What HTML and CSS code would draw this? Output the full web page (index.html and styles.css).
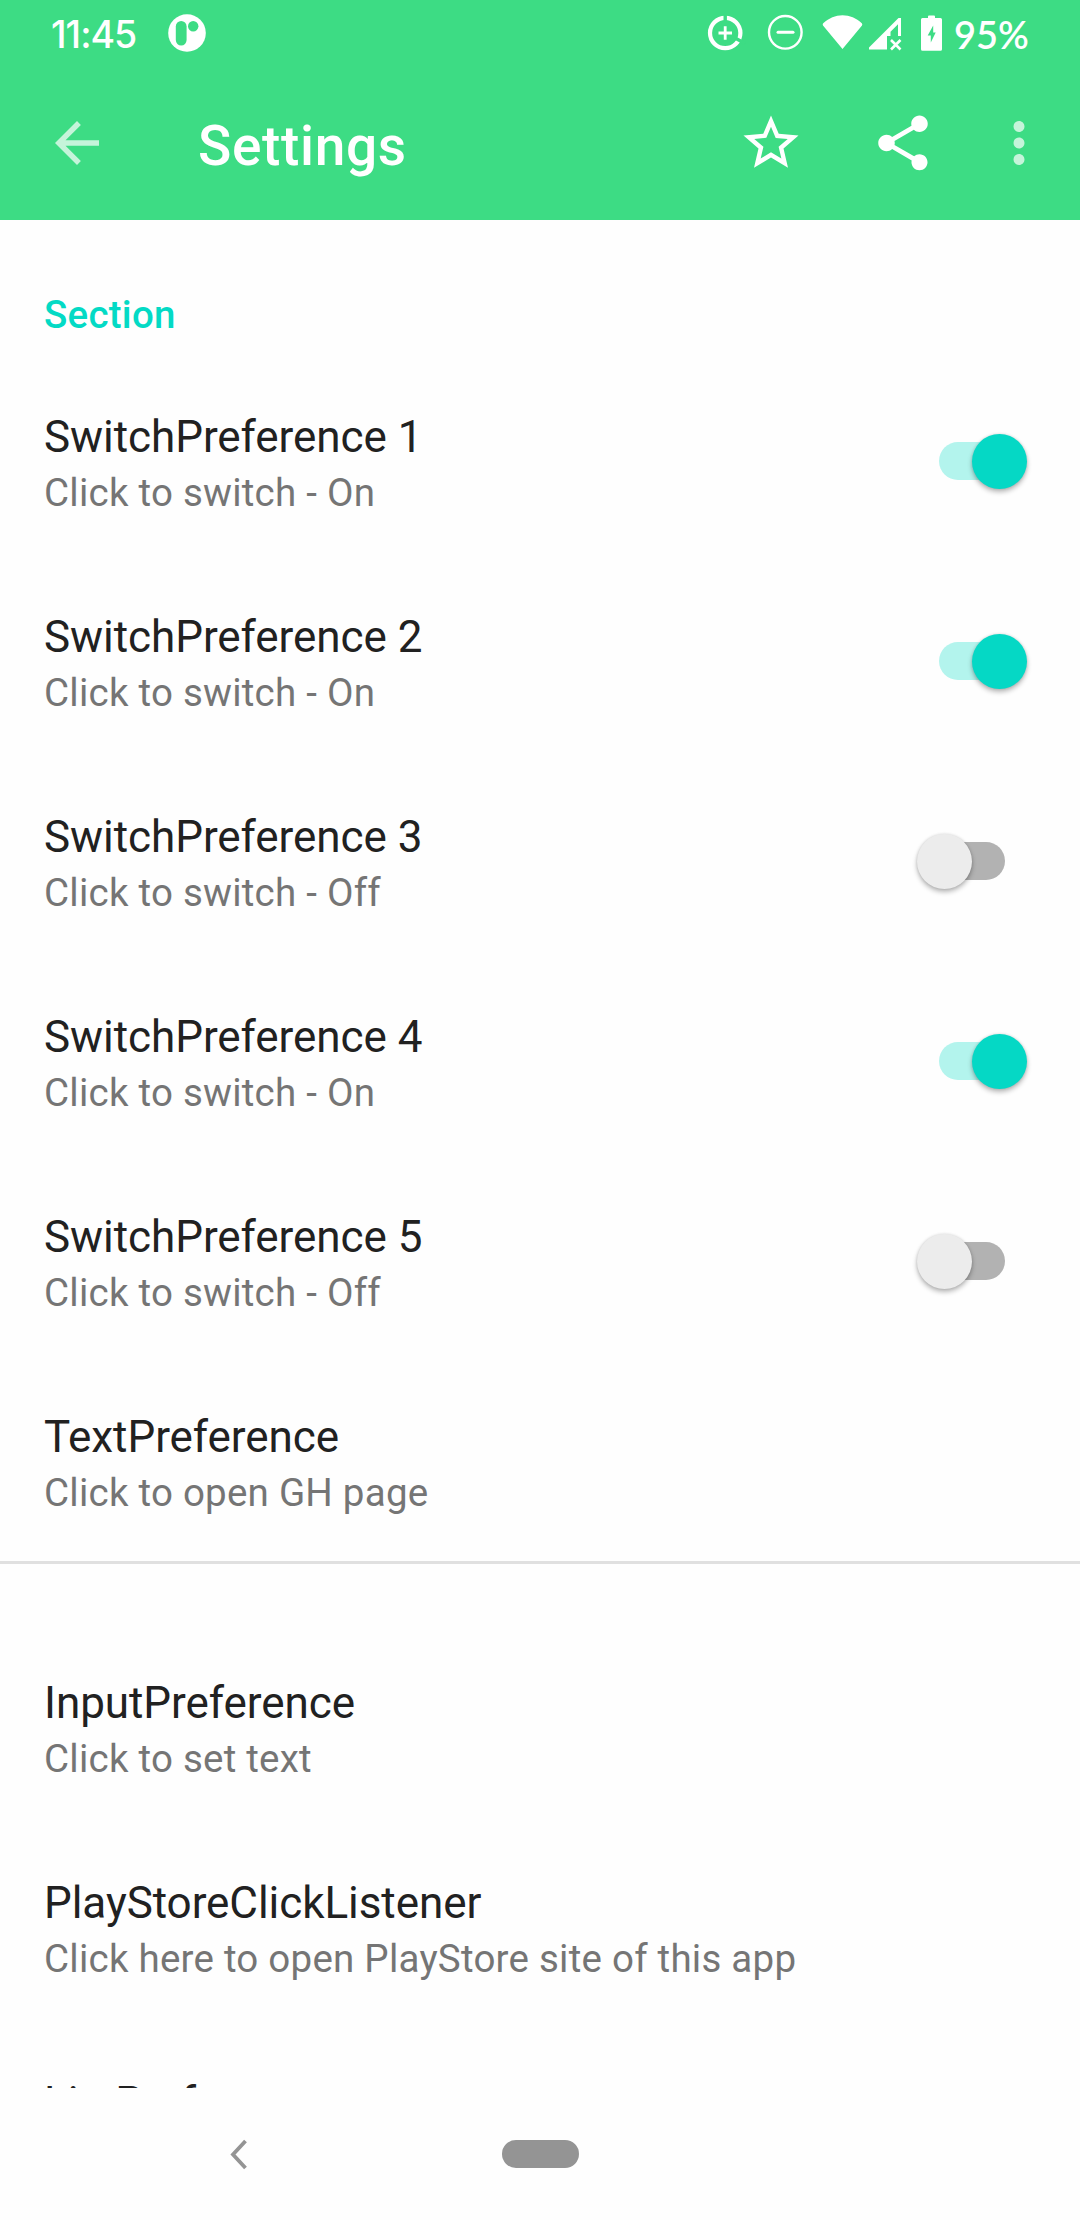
FILE: index.html
```html
<!DOCTYPE html>
<html lang="en">
<head>
<meta charset="utf-8">
<title>Settings</title>
<link rel="stylesheet" href="styles.css">
</head>
<body>
<div class="screen">
  <header class="header">
    <div class="status-bar">
      <span class="clock">11:45</span>
      <svg class="app-icon" width="38" height="38" viewBox="0 0 38 38"><circle cx="19" cy="19" r="18.8" fill="#fff"/><rect x="7.8" y="7" width="10.8" height="24.5" rx="5.4" fill="#3ddc84"/><circle cx="25.2" cy="12.2" r="5.2" fill="#3ddc84"/></svg>
      <svg class="status-icons" width="260" height="50" viewBox="700 8 260 50" fill="none" stroke="#fff">
        <circle cx="725.200" cy="33" r="15.200" stroke-width="4.200"/>
        <path class="ring-gap" d="M725.200 13V22M736 38.500L745 43.500"/>
        <path stroke-width="2.800" d="M718.500 33H732M725.200 26.300V39.700"/>
        <circle cx="785.300" cy="32.300" r="16.300" stroke-width="2.400"/>
        <path stroke-width="3" stroke-linecap="round" d="M778 32.300H793"/>
        <path fill="#fff" stroke="none" d="M842.500 49L823 25.500C822.500 24.500 822.800 23.500 823.500 23C829 18 835.500 15.200 842.500 15.200S856.500 18 861.500 23C862.300 23.700 862.500 24.700 862 25.500Z"/>
        <path fill="#fff" stroke="none" fill-rule="evenodd" d="M869 49.500V47.500L898.500 18H901V36H898V24.200L890.500 31.800V36H887V49.500Z"/>
        <path stroke-width="2.600" d="M891 40L900.500 49.500M900.500 40L891 49.500"/>
        <path fill="#fff" stroke="none" d="M928 18V16.500Q928 15.500 929 15.500H934Q935 15.500 935 16.500V18H940.500Q942 18 942 19.500V49.300Q942 50.800 940.500 50.800H922.500Q921 50.800 921 49.300V19.500Q921 18 922.500 18Z"/>
        <path fill="#3ddc84" stroke="none" d="M933.200 25.500L927.700 35.500H930.800V42.500L935.700 32.500H933.200Z"/>
      </svg>
      <span class="battery">95%</span>
    </div>
    <div class="toolbar">
      <svg class="back" width="66" height="66" viewBox="0 0 24 24"><path fill="#fff" d="M20 11H7.830l5.590-5.590L12 4l-8 8 8 8 1.410-1.410L7.830 13H20v-2z"/></svg>
      <h1 class="title">Settings</h1>
      <svg class="star" width="66" height="66" viewBox="0 0 24 24"><path fill="#fff" d="M22 9.240l-7.190-.62L12 2 9.190 8.630 2 9.240l5.460 4.730L5.820 21 12 17.270 18.180 21l-1.630-7.030L22 9.240zM12 15.400l-3.760 2.270 1-4.280-3.320-2.880 4.380-.38L12 6.100l1.710 4.040 4.380.38-3.320 2.880 1 4.280L12 15.400z"/></svg>
      <svg class="share" width="66" height="66" viewBox="0 0 24 24"><path fill="#fff" d="M18 16.080c-.76 0-1.440.3-1.960.77L8.910 12.700c.05-.23.09-.46.09-.7s-.04-.47-.09-.7l7.050-4.110c.54.5 1.250.81 2.040.81 1.660 0 3-1.340 3-3s-1.340-3-3-3-3 1.340-3 3c0 .24.04.47.09.7L8.040 9.810C7.500 9.310 6.790 9 6 9c-1.660 0-3 1.340-3 3s1.340 3 3 3c.79 0 1.500-.31 2.040-.81l7.120 4.160c-.05.21-.08.43-.08.65 0 1.610 1.310 2.920 2.920 2.920s2.920-1.310 2.920-2.920-1.310-2.920-2.920-2.920z"/></svg>
      <svg class="more" width="66" height="66" viewBox="0 0 24 24"><path fill="#fff" d="M12 8c1.100 0 2-.9 2-2s-.9-2-2-2-2 .9-2 2 .9 2 2 2zm0 2c-1.100 0-2 .9-2 2s.9 2 2 2 2-.9 2-2-.9-2-2-2zm0 6c-1.100 0-2 .9-2 2s.9 2 2 2 2-.9 2-2-.9-2-2-2z"/></svg>
    </div>
  </header>
  <main class="list">
    <h2 class="category">Section</h2>
    <div class="row"><div class="text"><div class="name">SwitchPreference 1</div><div class="summary">Click to switch - On</div></div><div class="switch on"><div class="thumb"></div></div></div>
    <div class="row"><div class="text"><div class="name">SwitchPreference 2</div><div class="summary">Click to switch - On</div></div><div class="switch on"><div class="thumb"></div></div></div>
    <div class="row"><div class="text"><div class="name">SwitchPreference 3</div><div class="summary">Click to switch - Off</div></div><div class="switch"><div class="thumb"></div></div></div>
    <div class="row"><div class="text"><div class="name">SwitchPreference 4</div><div class="summary">Click to switch - On</div></div><div class="switch on"><div class="thumb"></div></div></div>
    <div class="row"><div class="text"><div class="name">SwitchPreference 5</div><div class="summary">Click to switch - Off</div></div><div class="switch"><div class="thumb"></div></div></div>
    <div class="row"><div class="text"><div class="name">TextPreference</div><div class="summary">Click to open GH page</div></div></div>
    <div class="divider"></div>
    <div class="row"><div class="text"><div class="name">InputPreference</div><div class="summary">Click to set text</div></div></div>
    <div class="row"><div class="text"><div class="name">PlayStoreClickListener</div><div class="summary">Click here to open PlayStore site of this app</div></div></div>
    <div class="row"><div class="text"><div class="name">ListPreference</div></div></div>
  </main>
  <nav class="nav-bar">
    <svg class="nav-back" width="20" height="32" viewBox="0 0 20 32"><path d="M15.500 3L3 16.500L15.500 30" fill="none" stroke="#949494" stroke-width="3.800"/></svg>
    <div class="home-pill"></div>
  </nav>
</div>
</body>
</html>
```
FILE: styles.css
```css
* { box-sizing: border-box; }
body { margin: 0; font-family: Roboto, sans-serif; background: #fefefe; }
.screen { width: 1080px; height: 2220px; display: flex; flex-direction: column; overflow: hidden; }
.header { flex: none; height: 220px; background: #3ddc84; color: #fff; }
.status-bar { height: 66px; display: flex; align-items: flex-start; font-size: 38px; line-height: 46px; }
.clock { width: 86px; margin-left: 51px; padding-top: 12px; font-family: Inter, sans-serif; font-size: 37.5px; font-weight: 550; letter-spacing: -1px; white-space: nowrap; }
.app-icon { margin: 14px 0 0 31px; }
.status-icons { margin: 8px 0 0 494px; }
.ring-gap { stroke: #3ddc84; stroke-width: 3.4; }
.battery { margin-left: -6px; padding-top: 11px; font-family: Lato, sans-serif; font-weight: 600; white-space: nowrap; }
.toolbar { height: 154px; display: flex; align-items: flex-start; }
.toolbar svg { margin-top: 44px; flex: none; }
.back { margin-left: 44px; opacity: .7; }
.title { margin: 0 0 0 88px; padding-top: 48px; width: 540px; font-size: 55px; line-height: 64px; font-weight: 500; letter-spacing: .65px; }
.share { margin-left: 66px; }
.more { margin-left: 50px; opacity: .7; }
.list { flex: 1; min-height: 0; overflow: hidden; }
.category { margin: 0; height: 141px; padding: 72px 44px 0; font-size: 38.5px; line-height: 46px; font-weight: 500; letter-spacing: .25px; color: #03dac5; }
.row { height: 200px; padding: 50px 56px 0 44px; display: flex; justify-content: space-between; }
.name { font-size: 44px; line-height: 52px; letter-spacing: -.06px; color: #212121; white-space: nowrap; }
.summary { font-size: 38.5px; line-height: 46px; margin-top: 7px; letter-spacing: .24px; color: #757575; white-space: nowrap; }
.switch { width: 66px; height: 38px; margin: 31px 19px 0 0; border-radius: 19px; background: #b2b2b2; display: flex; align-items: center; }
.thumb { flex: none; width: 55px; height: 55px; border-radius: 50%; background: #ececec; margin-left: -22px; box-shadow: 0 3px 5px rgba(0,0,0,.28), 0 0 3px rgba(0,0,0,.12); }
.switch.on { margin-right: 0; width: 85px; background: #b3f4ed; }
.switch.on .thumb { background: #05d8c5; margin-left: 32.5px; }
.divider { height: 66px; border-top: 3px solid #e0e0e0; }
.nav-bar { flex: none; height: 132px; display: flex; align-items: center; }
.nav-back { margin-left: 230px; }
.home-pill { width: 77px; height: 28px; border-radius: 14px; background: #949494; margin-left: 252px; }
```
